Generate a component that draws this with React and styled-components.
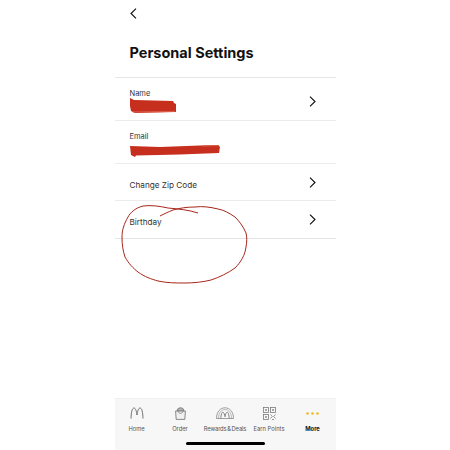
import styled, { createGlobalStyle } from "styled-components";

const GlobalStyle = createGlobalStyle`
  html, body {
    margin: 0;
    padding: 0;
    background: #fff;
  }
  body {
    font-family: "Inter", "Liberation Sans", sans-serif;
    color: #1c1c1c;
  }
`;

const Chevron = ({ left }) => (
  <svg width="7" height="11" viewBox="0 0 7 11" fill="none" stroke="#111" strokeWidth="1.15">
    <path d={left ? "M6 0.6 L1 5.5 L6 10.4" : "M1 0.6 L6 5.5 L1 10.4"} />
  </svg>
);

const Scribble = ({ width, height, d, streak }) => (
  <Smear width={width} height={height} viewBox={`0 0 ${width} ${height}`}>
    <path d={d} fill="#c62f1d" />
    <path d={streak} fill="none" stroke="#dc5f4b" strokeWidth="1" />
  </Smear>
);

const tabs = [
  {
    label: "Home",
    icon: (
      <svg width="14" height="12" viewBox="0 0 14 12" fill="none" stroke="#707070" strokeWidth="1">
        <path d="M1 11.5 C1.2 5 2.2 1 4 1 C5.6 1 6.5 4.5 7 8 C7.5 4.5 8.4 1 10 1 C11.8 1 12.8 5 13 11.5" />
      </svg>
    ),
  },
  {
    label: "Order",
    icon: (
      <svg width="11" height="13" viewBox="0 0 11 13" fill="none" stroke="#7a7a7a" strokeWidth="0.9">
        <path d="M2 4 L3 1.5 L5.5 0.7 L8 1.5 L9 4 Z" fill="#b5b5b5" />
        <path d="M0.6 4 H10.4 L9.8 12.4 H1.2 Z" fill="#f0f0f0" />
        <path d="M3 4 C3 7 8 7 8 4" strokeWidth="0.8" />
      </svg>
    ),
  },
  {
    label: "Rewards & Deals",
    tight: true,
    icon: (
      <svg width="18" height="12" viewBox="0 0 18 12" fill="none" stroke="#7a7a7a" strokeWidth="0.7">
        <path d="M0.5 11.5 C0.5 4.5 4.5 0.8 9 0.8 C13.5 0.8 17.5 4.5 17.5 11.5 Z" />
        <path d="M2.5 11.5 C2.5 6 5.2 2.6 9 2.6 C12.8 2.6 15.5 6 15.5 11.5" strokeWidth="0.5" />
        <path d="M4.8 11.5 C5 8 5.8 5.2 6.8 5.2 C7.8 5.2 8.6 7.5 9 9.8 C9.4 7.5 10.2 5.2 11.2 5.2 C12.2 5.2 13 8 13.2 11.5" strokeWidth="0.9" />
      </svg>
    ),
  },
  {
    label: "Earn Points",
    icon: (
      <svg width="13" height="13" viewBox="0 0 13 13" fill="none" stroke="#7a7a7a" strokeWidth="0.8">
        <rect x="0.5" y="0.5" width="5" height="5" />
        <rect x="7.5" y="0.5" width="5" height="5" />
        <rect x="0.5" y="7.5" width="5" height="5" />
        <rect x="2.2" y="2.2" width="1.6" height="1.6" fill="#7a7a7a" stroke="none" />
        <rect x="9.2" y="2.2" width="1.6" height="1.6" fill="#7a7a7a" stroke="none" />
        <rect x="2.2" y="9.2" width="1.6" height="1.6" fill="#7a7a7a" stroke="none" />
        <path d="M7.5 7.5 L9.3 9.5 L7.5 11.5 M12.5 7.5 L10.7 9.5 L12.5 11.5 M9 12.5 H11" />
      </svg>
    ),
  },
  {
    label: "More",
    active: true,
    icon: (
      <svg width="13" height="3" viewBox="0 0 13 3" fill="#f2b823">
        <circle cx="1.5" cy="1.5" r="1.3" />
        <circle cx="6.5" cy="1.5" r="1.3" />
        <circle cx="11.5" cy="1.5" r="1.3" />
      </svg>
    ),
  },
];

const App = () => {
  return (
    <>
      <GlobalStyle />
      <S.Page>
        <S.Screen>
          <S.BackBar>
            <Chevron left />
          </S.BackBar>
          <S.Title>Personal Settings</S.Title>
          <S.List>
            <S.Row $height={43} $top={4}>
              <S.FieldText $gap={0}>
                <S.SmallLabel>Name</S.SmallLabel>
                <Scribble
                  width={46}
                  height={15}
                  d="M0 0 L4 2 L43 3 L44 5 L46 6 L46 14 L5 15 L1 13 L0 8 Z"
                  streak="M3 14 L45 13.4"
                />
              </S.FieldText>
              <Chevron />
            </S.Row>
            <S.Row $height={43} $top={5}>
              <S.FieldText $gap={3}>
                <S.SmallLabel>Email</S.SmallLabel>
                <Scribble
                  width={90}
                  height={13}
                  d="M0 2 L30 3 L70 1.5 L88 1 L90 3 L89 9 L50 10.5 L6 11.5 L5 13 L1 11 Z"
                  streak="M72 2 L89 1.6"
                />
              </S.FieldText>
            </S.Row>
            <S.Row $height={37}>
              <S.RowLabel>Change Zip Code</S.RowLabel>
              <Chevron />
            </S.Row>
            <S.Row $height={38} $thick>
              <S.RowLabel>Birthday</S.RowLabel>
              <Chevron />
            </S.Row>
          </S.List>
          <S.Circle width="130" height="84" viewBox="0 0 130 84" fill="none" stroke="#a8261a" strokeWidth="1">
            <path d="M77 8 C68 5 58 4 47 3 C38 1 30 0 22 1 C14 3 9 8 7 12 C3 19 1 25 1 32 C1 40 2 46 4 52 C8 59 12 63 17 67 C24 72 30 74 37 76 C46 78 55 78 64 78 C73 78 82 77 90 75 C99 72 107 68 114 63 C120 57 124 50 125 42 C126 37 126 32 125 28 C122 21 118 16 114 12 C108 8 103 5 97 4 C89 2 81 1 74 2 C66 2 59 3 52 5 C47 7 43 9 39 11" />
          </S.Circle>
          <S.TabBar>
            <S.Tabs>
              {tabs.map((tab) => (
                <S.Tab key={tab.label}>
                  <S.TabIcon>{tab.icon}</S.TabIcon>
                  <S.TabLabel $active={tab.active} $tight={tab.tight}>
                    {tab.label}
                  </S.TabLabel>
                </S.Tab>
              ))}
            </S.Tabs>
            <S.HomeIndicator />
          </S.TabBar>
        </S.Screen>
      </S.Page>
    </>
  );
};
export default App;

const Smear = styled.svg`
  display: block;
`;

const S = {
  Page: styled.main`
    display: flex;
    justify-content: center;
    width: 450px;
    height: 450px;
    overflow: hidden;
    background: #fff;
  `,
  Screen: styled.section`
    position: relative;
    display: flex;
    flex-direction: column;
    width: 221px;
    height: 450px;
  `,
  BackBar: styled.div`
    display: flex;
    align-items: center;
    height: 11px;
    padding: 8px 0 0 15px;
  `,
  Title: styled.h1`
    margin: 24px 0 0;
    padding-left: 15px;
    font-size: 14.5px;
    line-height: 20px;
    font-weight: 700;
    color: #111;
  `,
  List: styled.div`
    margin-top: 14px;
    border-top: 1.5px solid #e6e6e6;
  `,
  Row: styled.div`
    display: flex;
    align-items: center;
    justify-content: space-between;
    box-sizing: border-box;
    height: ${({ $height }) => $height}px;
    padding: ${({ $top = 0 }) => $top}px 20px 0 15px;
    border-bottom: ${({ $thick }) => ($thick ? "1.5px solid #e4e4e4" : "1px solid #ececec")};
  `,
  FieldText: styled.div`
    display: flex;
    flex-direction: column;
    gap: ${({ $gap }) => $gap}px;
  `,
  SmallLabel: styled.span`
    font-size: 7.5px;
    line-height: 9px;
    color: #333;
  `,
  RowLabel: styled.span`
    padding-top: 5px;
    font-size: 8.2px;
    line-height: 12px;
    color: #333;
  `,
  Circle: styled.svg`
    position: absolute;
    left: 6px;
    top: 205px;
    pointer-events: none;
  `,
  TabBar: styled.nav`
    display: flex;
    flex-direction: column;
    align-items: center;
    height: 52px;
    margin-top: auto;
    background: #f7f7f7;
    border-top: 1px solid #f0f0f0;
    box-sizing: border-box;
  `,
  Tabs: styled.div`
    display: grid;
    grid-template-columns: 44px 43px 47px 41px 46px;
    width: 100%;
    height: 36px;
    padding-top: 7px;
  `,
  Tab: styled.div`
    display: flex;
    flex-direction: column;
    align-items: center;
  `,
  TabIcon: styled.div`
    display: flex;
    align-items: center;
    justify-content: center;
    height: 14px;
  `,
  TabLabel: styled.span`
    margin-top: 5px;
    font-size: 5.8px;
    line-height: 8px;
    white-space: nowrap;
    letter-spacing: ${({ $tight }) => ($tight ? "-0.12px" : "0")};
    word-spacing: ${({ $tight }) => ($tight ? "-0.8px" : "0")};
    font-weight: ${({ $active }) => ($active ? 700 : 400)};
    color: ${({ $active }) => ($active ? "#111" : "#555")};
  `,
  HomeIndicator: styled.div`
    width: 79px;
    height: 2.5px;
    border-radius: 2px;
    background: #000;
  `,
};
